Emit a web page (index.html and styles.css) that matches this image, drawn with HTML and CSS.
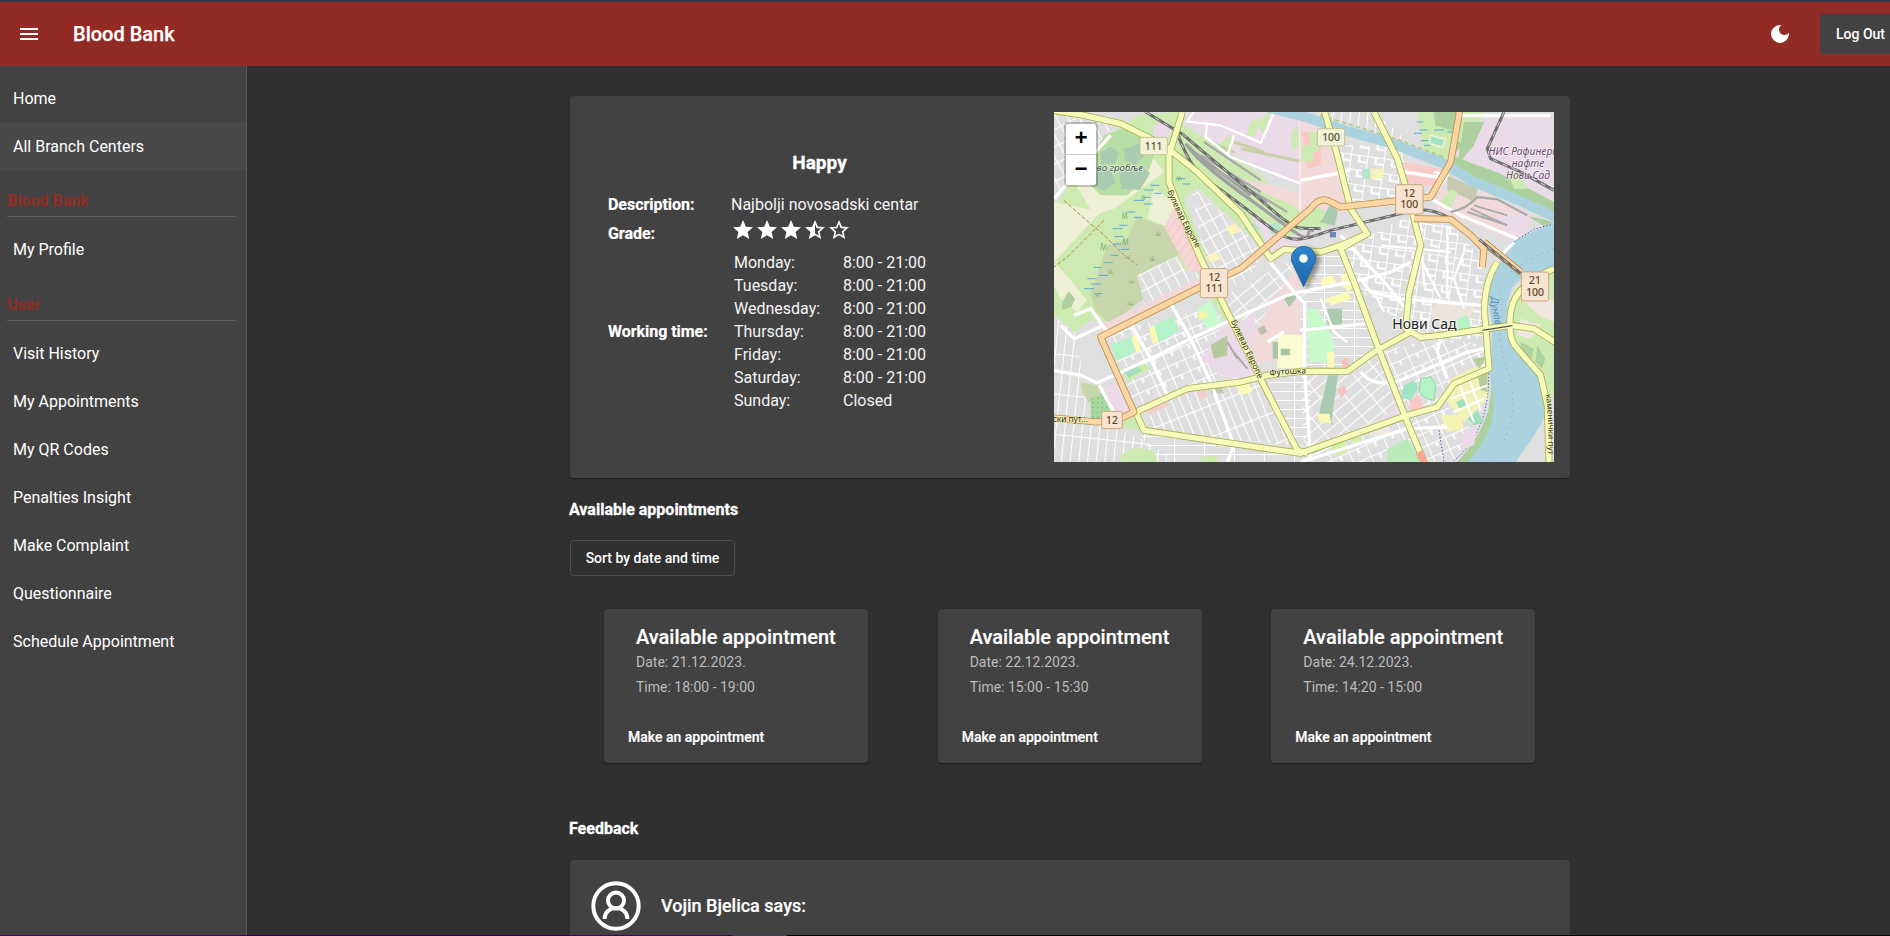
FILE: index.html
```
<!DOCTYPE html>
<html lang="en">
<head>
<meta charset="utf-8">
<title>Blood Bank</title>
<link rel="stylesheet" href="styles.css">
</head>
<body>
<header class="topbar">
  <svg class="menu-icon" viewBox="0 0 24 24"><path d="M3 18h18v-2H3v2zm0-5h18v-2H3v2zm0-7v2h18V6H3z"/></svg>
  <h1 class="brand">Blood Bank</h1>
  <svg class="moon-icon" viewBox="0 0 24 24"><path d="M12 3a9 9 0 1 0 9 9c0-.46-.04-.92-.1-1.36a5.39 5.39 0 0 1-4.4 2.26 5.4 5.4 0 0 1-3.14-9.8C12.92 3.04 12.46 3 12 3z"/></svg>
  <button class="logout">Log Out</button>
</header>
<div class="shell">
  <nav class="sidebar">
    <a class="nav-item">Home</a>
    <a class="nav-item active">All Branch Centers</a>
    <h3 class="nav-head">Blood Bank</h3>
    <a class="nav-item">My Profile</a>
    <h3 class="nav-head">User</h3>
    <a class="nav-item">Visit History</a>
    <a class="nav-item">My Appointments</a>
    <a class="nav-item">My QR Codes</a>
    <a class="nav-item">Penalties Insight</a>
    <a class="nav-item">Make Complaint</a>
    <a class="nav-item">Questionnaire</a>
    <a class="nav-item">Schedule Appointment</a>
  </nav>
  <main class="content">
    <section class="card center-card">
      <div class="info">
        <h2 class="center-name">Happy</h2>
        <div class="facts">
          <b class="label">Description:</b><span>Najbolji novosadski centar</span>
          <b class="label">Grade:</b>
          <div class="stars">
            <svg viewBox="0 0 24 24"><path d="M12 17.27 18.18 21l-1.64-7.03L22 9.24l-7.19-.61L12 2 9.19 8.63 2 9.24l5.46 4.73L5.82 21z"/></svg>
            <svg viewBox="0 0 24 24"><path d="M12 17.27 18.18 21l-1.64-7.03L22 9.24l-7.19-.61L12 2 9.19 8.63 2 9.24l5.46 4.73L5.82 21z"/></svg>
            <svg viewBox="0 0 24 24"><path d="M12 17.27 18.18 21l-1.64-7.03L22 9.24l-7.19-.61L12 2 9.19 8.63 2 9.24l5.46 4.73L5.82 21z"/></svg>
            <svg viewBox="0 0 24 24"><path d="m22 9.24-7.19-.62L12 2 9.19 8.63 2 9.24l5.46 4.73L5.82 21 12 17.27 18.18 21l-1.63-7.03L22 9.24zM12 15.4V6.1l1.71 4.04 4.38.38-3.32 2.88 1 4.28L12 15.4z"/></svg>
            <svg viewBox="0 0 24 24"><path d="m22 9.24-7.19-.62L12 2 9.19 8.63 2 9.24l5.46 4.73L5.82 21 12 17.27 18.18 21l-1.63-7.03L22 9.24zM12 15.4l-3.76 2.27 1-4.28-3.32-2.88 4.38-.38L12 6.1l1.71 4.04 4.38.38-3.32 2.88 1 4.28L12 15.4z"/></svg>
          </div>
          <b class="label">Working time:</b>
          <div class="hours">
            <span>Monday:</span><span>8:00 - 21:00</span>
            <span>Tuesday:</span><span>8:00 - 21:00</span>
            <span>Wednesday:</span><span>8:00 - 21:00</span>
            <span>Thursday:</span><span>8:00 - 21:00</span>
            <span>Friday:</span><span>8:00 - 21:00</span>
            <span>Saturday:</span><span>8:00 - 21:00</span>
            <span>Sunday:</span><span>Closed</span>
          </div>
        </div>
      </div>
      <div class="map">
        <svg class="tiles" viewBox="0 0 1500 1050">
          <defs>
            <pattern id="gridA" width="46" height="30" patternUnits="userSpaceOnUse" patternTransform="rotate(62)"><path d="M0 0H46M0 0V30" class="st"/></pattern>
            <pattern id="gridB" width="56" height="38" patternUnits="userSpaceOnUse" patternTransform="rotate(-24)"><path d="M0 0H56M0 0V38M28 0V16" class="st"/></pattern>
            <pattern id="gridC" width="50" height="44" patternUnits="userSpaceOnUse" patternTransform="rotate(8)"><path d="M0 0H50M0 0V44M26 0V20H50" class="st"/></pattern>
            <pattern id="gridD" width="60" height="30" patternUnits="userSpaceOnUse" patternTransform="rotate(-40)"><path d="M0 0H60M0 0V30" class="st"/></pattern>
            <pattern id="gridE" width="25" height="90" patternUnits="userSpaceOnUse" patternTransform="rotate(-22)"><path d="M0 0V90M0 0H25" class="st"/></pattern>
            <pattern id="gridF" width="90" height="27" patternUnits="userSpaceOnUse"><path d="M0 0H90M0 0V27" class="st"/></pattern>
            <pattern id="gridG" width="26" height="120" patternUnits="userSpaceOnUse" patternTransform="rotate(6)"><path d="M0 0V120M0 0H26" class="st"/></pattern>
            <pattern id="hatch" width="22" height="22" patternUnits="userSpaceOnUse" patternTransform="rotate(35)"><path d="M0 0V22" stroke="#eea9a9" stroke-width="2"/></pattern>
            <pattern id="dots" width="14" height="14" patternUnits="userSpaceOnUse"><circle cx="5" cy="5" r="1.6" fill="#3f7a55"/></pattern>
            <path id="bulEvr1" d="M340 238 Q370 310 428 412L460 480"/>
            <path id="bulEvr2" d="M530 628 Q570 710 612 800L640 860"/>
            <path id="futoska" d="M648 792 Q700 784 790 784"/>
            <path id="dunav" d="M1312 555 Q1314 600 1326 648L1340 700"/>
            <path id="kamen" d="M1475 848 Q1488 940 1480 1050V1100"/>
          </defs>
          <rect width="1500" height="1050" fill="#dfdfdf"/>

          <!-- street grids by district -->
          <polygon points="0,0 180,40 120,110 0,260" fill="url(#gridA)"/>
          <polygon points="410,220 640,420 560,520 460,500" fill="url(#gridA)"/>
          <polygon points="250,490 380,430 430,520 280,600" fill="url(#gridA)"/>
          <polygon points="810,0 960,0 1110,130 1000,110 850,60" fill="url(#gridG)"/>
          <polygon points="850,100 1050,100 1060,260 870,270" fill="url(#gridC)"/>
          <polygon points="850,420 1070,310 1190,340 1280,430 1300,680 1120,680 940,560" fill="url(#gridC)"/>
          <polygon points="740,430 860,420 970,690 900,780 740,780" fill="url(#gridF)"/>
          <polygon points="480,570 720,440 760,560 620,690 560,620" fill="url(#gridD)"/>
          <polygon points="130,670 500,580 560,800 240,880" fill="url(#gridB)"/>
          <polygon points="250,900 420,820 620,800 720,1000 270,960" fill="url(#gridE)"/>
          <polygon points="0,610 60,640 110,920 260,980 380,1050 0,1050" fill="url(#gridG)"/>
          <polygon points="260,960 760,1030 760,1050 300,1050" fill="url(#gridF)"/>
          <polygon points="640,800 770,790 770,1000 720,1000" fill="url(#gridF)"/>
          <polygon points="740,790 900,790 970,700 1050,900 750,1010" fill="url(#gridD)"/>
          <polygon points="970,720 1150,680 1300,700 1300,780 1150,880 1060,900" fill="url(#gridB)"/>
          <polygon points="750,1010 1060,910 1100,1050 740,1050" fill="url(#gridB)"/>
          <polygon points="1060,910 1180,880 1260,960 1200,1050 1110,1050" fill="url(#gridB)"/>

          <!-- western fields and cemetery -->
          <polygon points="0,290 60,190 180,60 250,10 380,0 400,180 470,190 390,260 460,440 440,480 250,530 150,630 0,610" fill="#cdebb0"/>
          <polygon points="0,270 140,300 0,450" fill="#eef0d5"/>
          <polygon points="60,210 300,140 330,180 180,290 120,310" fill="#eef0d5"/>
          <polygon points="300,230 380,280 340,345 280,320" fill="#eef0d5"/>
          <polygon points="0,450 30,480 120,590 0,610" fill="#eef0d5"/>
          <path d="M110 150l40-80 60-20 70 30 20 50-20 60-60 60-80 0-40-40z" fill="#b8dda5"/>
          <path d="M140 120l30-16 26 20-14 30-40 4zM210 110l44-14 22 30-34 34-30-14zM120 170l50 6 16 36-36 24-40-24zM196 184l66-20 26 20-30 50-56-4z" fill="#aacbaf"/>
          <polygon points="250,315 340,345 390,420 250,490 280,550 170,640 100,570 160,400 220,380" fill="#c8d7ab"/>
          <polygon points="330,345 360,290 380,290 445,470 410,490" fill="#f5d5d5"/>
          <polygon points="330,345 360,290 380,290 445,470 410,490" fill="url(#hatch)"/>
          <path d="M250 490L370 433L392 475L440 485L400 560L275 596z" fill="#dfdfdf"/>
          <path d="M250 490L370 433L392 475L440 485L400 560L275 596z" fill="url(#gridA)"/>
          <polygon points="140,640 440,495 445,535 150,685" fill="#f2dada"/>
          <polygon points="0,520 20,560 70,600 110,550 130,610 60,660 0,610" fill="#cdebb0"/>
          <path d="M25 570l18-32 20 22-10 24-30 10z" fill="#add19e"/>
          <path d="M30 265l60 54 60 50 60 60 40 30M150 325l-50 50-60 60-40 30" class="track"/>
          <path d="M290 220h26M270 234h28M300 244h22M270 256h20M240 265h30M270 276h26M220 300h24M240 316h26M196 340h24M176 350h30M180 374h28M176 396h26M200 412h26M170 430h24M150 452h26M120 466h22M134 490h28M100 500h24M110 516h30M370 200h24M386 216h22M90 530h30M120 545h24" class="marsh"/>
          <path d="M205 320l3-18 4 18 5-20 3 20M206 400l4-22 4 22 5-20 3 20M140 415l4-22 5 22 5-18 3 18M262 264l4-14 4 14 4-14M366 206l4-12 4 12 4-12 4 12" class="reed"/>
          <path d="M304 370h18M306 361l7 9 7-9M313 357v13M286 445h18M288 436l7 9 7-9M295 432v13M212 438h18M214 429l7 9 7-9M160 484h18M162 475l7 9 7-9M169 471v13M224 512h18M226 503l7 9 7-9M120 552h18M122 543l7 9 7-9M220 578h18M222 569l7 9 7-9" class="scrub"/>

          <!-- northern industry and rail yard -->
          <polygon points="380,0 740,0 760,220 700,210 470,80" fill="#ebdbe8"/>
          <polygon points="260,10 360,20 620,190 740,300 740,390 600,380 400,200 380,140" fill="#cdebb0"/>
          <path d="M300 40l30-14 24 30-20 40-40-10z" fill="#ebdbe8"/>
          <polygon points="560,200 660,220 750,250 760,330 720,280 600,230" fill="#f2dada"/>
          <polygon points="590,310 640,330 700,390 760,330 740,420 660,430" fill="#ebdbe8"/>
          <path d="M590 30l30-18-18 60-26 6zM490 100l40-30 6 40-26 30zM710 70l20-30 6 60-20 20zM610 40l30-40 10 4-20 60z" fill="#cdebb0"/>
          <path d="M540 90l90 30M560 110l180 38M480 95l60 26" stroke="#c8d0a8" stroke-width="9"/>
          <path d="M395 95C450 170 560 240 680 330S740 350 780 355M400 100C430 140 520 190 590 250" class="yard"/>
          <path d="M450 90L620 205M440 130L620 240M480 170L700 300M520 190L640 270" stroke="#aaa" stroke-width="7" fill="none"/>
          <path d="M460 30L455 75L530 135L740 215L780 220M420 0L400 28L500 40L620 92L640 50L660 0M740 30V300M520 130L540 70" class="minor"/>

          <polygon points="738,20 820,40 850,160 900,290 740,340" fill="#f2dada"/>
          <polygon points="744,60 800,60 800,160 760,170" fill="#f9c9c2"/>
          <path d="M744 100h34v48h-34zM764 60h30v60h-20z" fill="#cdebb0"/>
          <path d="M738 300l40-20 40 20 10 40-90 20z" fill="#cdebb0"/>
          <path d="M806 320l20-40 26 16-10 46-46-12z" fill="#aacbaf"/>
          <path d="M1050 150l110 22-20 50-80-10z" fill="#f8caca"/>
          <path d="M925 170h24v30h-24zM1060 250l60 0-20 40-40-10z" fill="#b6e3cb"/>
          <path d="M950 170h38v30h-38z" fill="#f5f3b8"/>
          <polygon points="1090,0 1290,0 1190,190 1110,130" fill="#cdebb0"/>
          <path d="M1140 0h84l-20 60-60-20zM1200 80l30 20-20 70-30-20z" fill="#add19e"/>
          <path d="M1130 70l44 12-8 24-40-12z" fill="#9fe5c5" stroke="#eef0d5" stroke-width="5"/>
          <path d="M1088 30h20M1096 54h24M1080 64h24M1140 54h30M1180 60h20M1100 86h24M1110 100h20" class="marsh"/>
          <polygon points="1290,20 1500,20 1500,300 1330,220 1200,130" fill="#ebdbe8"/>
          <path d="M1230 30l60 0-30 70-50 60z" fill="#add19e"/>
          <path d="M1190 130L1340 185L1500 270V310L1340 230L1200 180z" fill="#add19e"/>
          <path d="M1360 180l40 0 20 50-40 0z" fill="#cdebb0"/>
          <path d="M1180 190l90 40-10 60-80-30z" fill="#c6c8b0"/>
          <path d="M1160 230l60 20-20 60-60-20zM1220 250l40 20-30 60-40-20z" fill="#f2dada"/>
          <path d="M1190 230l20 10-20 50-34-14z" fill="#cdebb0"/>
          <path d="M1200 310L1290 240L1440 310L1400 380L1360 380z" fill="#f2dada"/>
          <path d="M1330 320l90-20 10 30-40 50-30-20z" fill="#ebdbe8"/>
          <path d="M1420 312l50 10 30 10-30 10z" fill="#add19e"/>
          <path d="M1250 290l110 50M1240 300l120 40M1260 280l100 30" stroke="#aaa" stroke-width="6"/>

          <!-- canal and Danube -->
          <path d="M640 -14L738 10L798 29L888 59L1018 96L1168 154L1258 209L1358 249L1510 318" fill="none" stroke="#aad3df" stroke-width="30"/>
          <path d="M800 10L1030 82L1170 136" stroke="#b9c98b" stroke-width="5" stroke-dasharray="14 8" fill="none"/>
          <path d="M1380 530L1500 469V880L1478 860L1463 804L1383 704z" fill="#cdebb0"/>
          <path d="M1400 560l50-20 50 30v60l-40-16zM1400 620l60 20-30 40-40-10z" fill="#f1e6df"/>
          <path d="M1400 690l40 20-10 40-30-20zM1450 700l24 40-10 30-20-20z" fill="#add19e"/>
          <path d="M1500 850L1400 1050H1500z" fill="#dfdfdf"/>
          <path d="M1500 334L1458 349L1388 384L1348 434L1318 484L1308 534L1303 564L1313 634L1313 704L1308 784L1316 844L1308 904L1283 974L1238 1029L1225 1050H1385L1438 974L1473 914L1478 854L1463 804L1428 754L1383 704L1373 654L1358 584L1372 530L1400 500L1458 484L1500 469z" fill="#aad3df"/>
          <path d="M1308 790Q1330 920 1210 1050H1240Q1330 960 1318 850z" fill="#add19e"/>
          <path d="M1336 540Q1350 600 1336 650Q1340 720 1370 800Q1400 960 1300 1050M1500 410L1430 440L1340 500" fill="none" stroke="#a79cc0" stroke-width="3" stroke-dasharray="4 14"/>
          <path d="M1490 338L1440 352L1370 395M1304 774Q1310 960 1195 1050M1155 955L1170 1050" fill="none" stroke="#4545d8" stroke-width="3" stroke-dasharray="4 6"/>

          <!-- parks, schools, squares -->
          <path d="M560 630L600 600L620 790L520 800L440 740L480 690L500 650z" fill="#ebdbe8"/>
          <path d="M470 700l50-30 0 60-40 10z" fill="#b5c99a"/>
          <path d="M530 710l50 60M520 690l30 50" stroke="#aaa" stroke-width="6"/>
          <path d="M660 560L740 460V750L600 750L580 700z" fill="#f2dada"/>
          <path d="M690 560l24-20 14 16-22 30z" fill="#a9c6a8"/>
          <path d="M670 668h80v100h-80z" fill="#fbfbd2"/><path d="M656 690h16v50h-16zM680 710h28v20h-28z" fill="#a9c6a8"/>
          <path d="M610 650l20-10 10 20-20 10z" fill="#c0bfae"/>
          <path d="M430 590l40-24 30 70-38 24z" fill="#c8facc"/><path d="M430 605l26-10 4 20-24 10z" fill="#f5f3a8"/>
          <path d="M470 560l36-14 28 70-22 14z" fill="#cdebb0"/>
          <path d="M300 640l56-28 18 44-60 36zM170 700l60-26 14 44-60 30z" fill="#b5f2c8"/>
          <path d="M286 650l14-10 14 48-18 8zM234 676l14-6 14 44-14 8z" fill="#fdfab0"/>
          <path d="M146 830l60-18 28 90-40 14-30-40z" fill="#ebdbe8"/>
          <path d="M80 810l60 14 10 20-44 30-20-30z" fill="#c8d7ab"/>
          <path d="M110 860l40-18 20 60-10 24-50-8z" fill="#a6d8a0"/><path d="M110 860l40-18 20 60-10 24-50-8z" fill="url(#dots)"/>
          <path d="M200 770l70-20 20 20-70 40z" fill="#cdebb0"/><path d="M210 780l40-18 14 14-40 22z" fill="#aadcc0"/>
          <path d="M200 910l60-10 20 60-80-16z" fill="#cdebb0"/>
          <path d="M545 820l40-6 10 26-34 10z" fill="#fdfab8"/>
          <path d="M470 826l32-6 8 24-38 2z" fill="#c6c8b0"/>
          <path d="M280 890l60-24 6 14-60 30zM430 840l20-6 10 20-22 8z" fill="#f4cdcd"/>
          <path d="M200 1030l40-24 60 10 10 34h-110zM440 1036l50-6 0 20-50 0z" fill="#cdebb0"/>
          <path d="M820 590h44v48h-44z" fill="#aacbaf"/><path d="M810 560l70-20 14 20-60 20z" fill="#fdfab8"/>
          <path d="M760 590h30l50 100v60h-76z" fill="#c8facc"/><path d="M820 720h20v50h-20z" fill="#fdfab8"/>
          <path d="M822 790h30l-20 140 10 10-30-10-18-20z" fill="#a9c9b0"/><path d="M790 905l36 0 6 30-36-6z" fill="#fdfab8"/>
          <path d="M850 830l20-10 10 20-20 16zM860 745l20-8 10 26-20 8zM938 600l14 6-2 18-14-4z" fill="#f6c5c0"/>
          <path d="M1130 590l50-24 90 4-20 40-60 40-40-20z" fill="#ece5dc"/><path d="M1210 620l30-10 14 40-40 10z" fill="#b5f2c8"/>
          <path d="M1050 820l30-14 14 20-24 40-30-10z" fill="#9fe5c5"/>
          <path d="M1100 800l30-6 16 26-6 46-26-8-18-18z" fill="#b5f2c8" stroke="#8fd6a8" stroke-width="3"/>
          <path d="M1066 870l24-26 20 40-40 20z" fill="#f9c9c9"/>
          <path d="M980 920l50-34 10 20-54 34z" fill="#ebdbe8"/>
          <path d="M1190 800l60-30 50-10 0 100-70 70-50-60z" fill="#f1f2ba"/>
          <path d="M1240 920l30-24 20 34-30 10zM1206 870l20-10 12 20-20 14z" fill="#9fdfba"/>
          <path d="M1270 790l30-10 0 60-20-6zM1256 740l40-6-20 36z" fill="#b4cd9a"/>
          <path d="M1220 970l50-30-10 60-30 10z" fill="#ebdbe8"/>
          <path d="M1160 910l60 0 10 40-50 10z" fill="#f5f3b0"/>
          <path d="M1180 830l100-40M1190 860l110-40M1200 900l90-40M1210 800l50 130M1240 786l40 110" class="st"/>
          <path d="M1000 1010l60-30 40 70h-100z" fill="#b8ebb8"/><path d="M930 940l60-20 20 44-50 10z" fill="#eee8e0"/>
          <path d="M830 1000l40-14 14 30-40 16zM890 980l30-6 10 20-30 10z" fill="#d2f0a8"/>
          <path d="M860 490l30-14 14 40-20 24-20-20zM750 490l20-8 10 26-20 6zM800 500l36-10 10 20-40 14z" fill="#fdfab8"/>
          <path d="M516 345l30-10 14 24-30 10zM460 432l26-10 14 20-30 10z" fill="#fdf3b8"/>
          <path d="M570 350l30-20 20 20-30 20zM640 340l30-10 14 20-30 20z" fill="#b6e3cb"/>

          <!-- white roads -->
          <path d="M0 775L80 790L130 812L180 790L290 740L410 680L540 620L700 550L738 540L890 510L1010 480L1070 450" class="main-w"/>
          <path d="M230 635L290 740L340 850M350 575L410 680L470 810L540 1000L520 1050M645 445L720 540L752 575L752 780L770 1040M860 370L1000 520L1070 610" class="main-w"/>
          <path d="M738 655L940 635M920 780Q960 830 1040 805L1240 720L1290 710M1160 670L1150 720L1180 800M740 1050L1060 950L1180 945M920 500L950 540L1040 560L1280 580M740 205L870 180L890 170" class="main-w"/>
          <path d="M1490 11H1220M1140 180L1180 190L1130 260L1220 310L1390 380M1380 392L1330 440M1050 180L1180 200M136 820L190 920M160 660L110 590L60 610M150 640L60 680L20 640" class="main-w"/>
          <path d="M800 560L840 660L880 690M960 540L990 600M1095 430L1160 560M1100 330L1110 520M1180 340L1180 560M1230 420L1200 500L1230 590M980 400L1080 410L1190 420" class="minor"/>
          <path d="M640 690L690 660M170 70L60 190L0 260" class="main-w"/>

          <!-- railways -->
          <path d="M275 0L390 70C470 140 560 210 650 290S740 345 800 350M370 65C400 140 420 180 480 220S600 310 660 355S760 380 830 355L1060 300Q1120 280 1190 320L1290 400L1400 485" class="rail"/>
          <path d="M275 0L390 70C470 140 560 210 650 290S740 345 800 350M370 65C400 140 420 180 480 220S600 310 660 355S760 380 830 355L1060 300Q1120 280 1190 320L1290 400L1400 485" class="rail-dash"/>
          <path d="M1350 0L1300 110L1310 140L1400 180L1500 235" class="rail"/><path d="M1350 0L1300 110L1310 140L1400 180L1500 235" class="rail-dash"/>
          <path d="M1190 300Q1240 290 1270 255L1330 262L1420 310" stroke="#aaa" stroke-width="7" fill="none"/>

          <!-- yellow roads -->
          <g class="casing-y"><path d="M0 -4L90 10L200 35L330 100L430 180L560 305L650 440L690 412L800 420L860 400L940 365"/><path d="M385 0L345 130L345 210L380 300L440 440L500 560L580 720L635 830L730 1015L760 1024"/><path d="M812 0L850 130L890 290L940 365L860 410L900 510L970 700L1060 930L1110 1050"/><path d="M960 0L1030 140L1060 240L1080 320L1100 400L1065 545L1055 650L1100 676L1160 670L1300 650L1370 640L1440 650L1510 695"/><path d="M1330 450Q1280 530 1295 640L1305 770L1200 815L1150 885L1060 910L740 1024L640 1010L270 955L245 900L400 830L560 810L640 790L740 778H880L960 720L1070 660"/><path d="M1500 470Q1380 520 1370 600T1390 710L1460 790L1480 880L1485 1050"/></g>
          <g class="fill-y"><path d="M0 -4L90 10L200 35L330 100L430 180L560 305L650 440L690 412L800 420L860 400L940 365"/><path d="M385 0L345 130L345 210L380 300L440 440L500 560L580 720L635 830L730 1015L760 1024"/><path d="M812 0L850 130L890 290L940 365L860 410L900 510L970 700L1060 930L1110 1050"/><path d="M960 0L1030 140L1060 240L1080 320L1100 400L1065 545L1055 650L1100 676L1160 670L1300 650L1370 640L1440 650L1510 695"/><path d="M1330 450Q1280 530 1295 640L1305 770L1200 815L1150 885L1060 910L740 1024L640 1010L270 955L245 900L400 830L560 810L640 790L740 778H880L960 720L1070 660"/><path d="M1500 470Q1380 520 1370 600T1390 710L1460 790L1480 880L1485 1050"/></g>

          <!-- orange roads -->
          <g class="casing-o"><path d="M0 918L130 930L200 920L240 900L140 675L440 525L560 470L770 290Q800 250 830 270L860 285L1130 255L1190 150L1215 10V-5M1080 320L1190 322L1250 370L1290 410L1285 465M1290 390L1400 480"/></g>
          <g class="fill-o"><path d="M0 918L130 930L200 920L240 900L140 675L440 525L560 470L770 290Q800 250 830 270L860 285L1130 255L1190 150L1215 10V-5M1080 320L1190 322L1250 370L1290 410L1285 465M1290 390L1400 480"/></g>
          <path d="M1094 1020L1112 1054" stroke="#f9a58f" stroke-width="20"/>
          <path d="M1275 382L1400 484" class="rail"/><path d="M1275 382L1400 484" class="rail-dash"/>
          <path d="M1285 655L1375 641" stroke="#555" stroke-width="4"/>
          <path d="M828 360h18v16h-18z" fill="#7085b0"/>

          <!-- labels -->
          <g class="shield">
            <rect x="258" y="76" width="82" height="52" rx="6" class="sy"/><text x="299" y="115">111</text>
            <rect x="790" y="50" width="82" height="52" rx="6" class="sy"/><text x="831" y="88">100</text>
            <rect x="1025" y="218" width="82" height="88" rx="6"/><text x="1066" y="254">12</text><text x="1066" y="289">100</text>
            <rect x="439" y="470" width="82" height="87" rx="6"/><text x="481" y="506">12</text><text x="481" y="541">111</text>
            <rect x="1402" y="480" width="82" height="87" rx="6"/><text x="1443" y="516">21</text><text x="1443" y="551">100</text>
            <rect x="143" y="898" width="62" height="52" rx="6"/><text x="174" y="936">12</text>
          </g>
          <text x="112" y="178" class="place-i green">ово гробље</text>
          <g class="place-i purple" text-anchor="middle"><text x="1408" y="129">НИС Рафинери</text><text x="1422" y="164">нафте</text><text x="1422" y="200">Нови Сад</text></g>
          <text x="1015" y="651" class="city">Нови Сад</text>
          <g class="road-name"><text><textPath href="#bulEvr1">Булевар Европе</textPath></text><text><textPath href="#bulEvr2">Булевар Европе</textPath></text><text><textPath href="#futoska">Футошка</textPath></text><text><textPath href="#kamen">каменички пут</textPath></text><text x="-4" y="931">ски пут...</text></g>
          <text class="river"><textPath href="#dunav">Дунав</textPath></text>
        </svg>
        <div class="zoom"><span>+</span><span>−</span></div>
        <svg class="pin" viewBox="0 0 25 41"><defs><linearGradient id="pinFill" x2="0" y2="1"><stop stop-color="#2e86cf"/><stop offset="1" stop-color="#1e65a8"/></linearGradient></defs><path d="M12.5.5C5.9.5.5 5.9.5 12.4c0 2.7.8 4.8 2.1 7L12.500 40.500 22.400 19.400c1.300-2.200 2.100-4.300 2.100-7C24.500 5.900 19.100.5 12.500.5z" fill="url(#pinFill)" stroke="#2466a5"/><circle cx="12.500" cy="12.500" r="4.300" fill="#fff"/></svg>
      </div>
    </section>

    <h3 class="section-title">Available appointments</h3>
    <button class="sort">Sort by date and time</button>
    <section class="slots">
      <article class="card slot"><h4>Available appointment</h4><p>Date: 21.12.2023.</p><p>Time: 18:00 - 19:00</p><a>Make an appointment</a></article>
      <article class="card slot"><h4>Available appointment</h4><p>Date: 22.12.2023.</p><p>Time: 15:00 - 15:30</p><a>Make an appointment</a></article>
      <article class="card slot"><h4>Available appointment</h4><p>Date: 24.12.2023.</p><p>Time: 14:20 - 15:00</p><a>Make an appointment</a></article>
    </section>

    <h3 class="section-title">Feedback</h3>
    <section class="card feedback">
      <svg class="avatar" viewBox="0 0 50 50"><circle cx="25" cy="25" r="22.700"/><circle cx="25" cy="19.500" r="8"/><path d="M13.700 38V37a11.300 10 0 0 1 22.600 0v1"/></svg>
      <span>Vojin Bjelica says:</span>
    </section>
  </main>
</div>
<div class="edge"></div>
</body>
</html>
```
FILE: styles.css
```
* { box-sizing: border-box; }
body {
  margin: 0;
  height: 936px;
  overflow: hidden;
  display: flex;
  flex-direction: column;
  background: #303030;
  color: #fff;
  font: 400 16px/24px Roboto, sans-serif;
}
h1, h2, h3, h4, p { margin: 0; }
button { font: inherit; color: inherit; }

.topbar {
  flex: none;
  height: 66px;
  border-top: 2px solid #353545;
  background: #912b23;
  display: flex;
  align-items: center;
  padding-left: 17px;
  overflow: hidden;
}
.topbar svg { flex: none; width: 24px; height: 24px; fill: #fff; }
.brand { margin-left: 32px; font-size: 20px; font-weight: 500; -webkit-text-stroke: .25px #fff; }
.moon-icon { margin-left: auto; }
.logout {
  flex: none;
  width: 82px;
  height: 40px;
  margin: 0 -12px 0 28px;
  padding: 0 0 1px 16px;
  border: 0;
  border-radius: 4px;
  background: #424242;
  font-size: 14px;
  font-weight: 500;
  text-align: left;
}

.shell { flex: 1; min-height: 0; display: flex; }
.sidebar {
  flex: none;
  width: 247px;
  padding-top: 8px;
  background: #424242;
  border-right: 1px solid #5a5a5a;
  display: flex;
  flex-direction: column;
}
.nav-item { flex: none; height: 48px; padding-left: 13px; line-height: 49px; }
.nav-item.active { background: #494949; }
.nav-head {
  flex: none;
  height: 47px;
  margin: 0 10px 8px 7px;
  padding-top: 19px;
  border-bottom: 1px solid #5e5e5e;
  color: #912b23;
  font-size: 16px;
  font-weight: 700;
}
.nav-item + .nav-head ~ .nav-head { padding-top: 20px; height: 48px; }

.content {
  flex: none;
  width: 1000px;
  margin-left: 323px;
  padding-top: 30px;
  display: flex;
  flex-direction: column;
  align-items: flex-start;
}
.card {
  background: #424242;
  border-radius: 4px;
  box-shadow: 0 2px 1px -1px rgba(0,0,0,.2), 0 1px 1px rgba(0,0,0,.14), 0 1px 3px rgba(0,0,0,.12);
}
.center-card { flex: none; width: 1000px; height: 382px; padding: 16px; display: flex; justify-content: space-between; }
.info { width: 468px; padding: 38px 0 0 22px; }
.center-name { width: 423px; font-size: 19px; line-height: 26px; text-align: center; font-weight: 700; -webkit-text-stroke: .3px #fff; }
.facts { display: grid; grid-template-columns: 123px auto; align-items: center; margin-top: 17px; line-height: 23px; color: #f5f5f5; }
.label { color: #fff; font-weight: 700; letter-spacing: -.04px; -webkit-text-stroke: .2px #fff; }
.stars { display: flex; height: 35px; padding-bottom: 8px; align-items: center; }
.stars svg { width: 24px; height: 24px; fill: #fff; }
.hours { display: grid; grid-template-columns: 109px auto; padding-left: 3px; }

.map { position: relative; width: 500px; height: 350px; overflow: hidden; }
.tiles { display: block; width: 500px; height: 350px; }
.st { fill: none; stroke: #fff; stroke-width: 6; }
.minor { fill: none; stroke: #fff; stroke-width: 7; }
.main-w { fill: none; stroke: #fff; stroke-width: 10; stroke-linejoin: round; }
.track { fill: none; stroke: #b28d52; stroke-width: 3; stroke-dasharray: 12 6; }
.marsh { stroke: #58a9dc; stroke-width: 3; }
.reed { fill: none; stroke: #68ad78; stroke-width: 2; }
.scrub { fill: none; stroke: #9aac78; stroke-width: 2; }
.yard { fill: none; stroke: #a0a0a0; stroke-width: 10; }
.rail { fill: none; stroke: #6d6d6d; stroke-width: 9; }
.rail-dash { fill: none; stroke: #d5d5d5; stroke-width: 3; stroke-dasharray: 16 16; }
.casing-y path, .fill-y path, .casing-o path, .fill-o path { fill: none; stroke-linejoin: round; }
.casing-y path { stroke: #a9b050; stroke-width: 21; }
.fill-y path { stroke: #f6fabb; stroke-width: 16; }
.casing-o path { stroke: #bd8f4b; stroke-width: 21; }
.fill-o path { stroke: #fcd6a4; stroke-width: 16; }
.tiles text { font-family: "Noto Sans", sans-serif; }
.shield rect { fill: #f6e3d0; stroke: #c9a57c; stroke-width: 3; }
.shield .sy { fill: #f1f2d8; stroke: #c2c48f; }
.shield text { font-size: 31px; text-anchor: middle; fill: #5f4427; stroke: #5f4427; stroke-width: .6; }
.shield .sy + text { fill: #50502c; }
.place-i { font-size: 29px; font-style: italic; paint-order: stroke; stroke: #fff; stroke-opacity: .6; stroke-width: 5; }
.green { fill: #3c5546; }
.purple { fill: #6e4a72; font-size: 31px; }
.city { font-size: 42px; fill: #222; paint-order: stroke; stroke: #fff; stroke-width: 6; stroke-opacity: .7; }
.road-name { font-size: 25px; fill: #2b2b1c; paint-order: stroke; stroke: #f6fabb; stroke-width: 3; }
.river { font-size: 30px; font-style: italic; fill: #5c8fbb; }
.zoom {
  position: absolute;
  left: 10px;
  top: 10px;
  width: 34px;
  height: 65px;
  border: 2px solid rgba(0,0,0,.2);
  border-radius: 4px;
  background: #fff;
  background-clip: padding-box;
  color: #000;
  font: 700 22px/30px "Liberation Mono", monospace;
  text-align: center;
}
.zoom span { display: block; height: 31px; padding-top: 2px; line-height: 28px; }
.zoom span:first-child { border-bottom: 1px solid #ccc; }
.pin { position: absolute; left: 237px; top: 134px; width: 25px; height: 41px; filter: drop-shadow(4px 2px 2px rgba(0,0,0,.4)); }

.section-title { flex: none; margin: 19px 0 0 -1px; font-size: 16px; line-height: 25px; height: 24px; font-weight: 700; -webkit-text-stroke: .3px #fff; }
.sort { flex: none; height: 36px; width: 165px; margin-top: 19px; padding: 0 0 1px; border: 1px solid #4c4c4c; border-radius: 4px; background: none; font-size: 14px; font-weight: 500; }
.slots { flex: none; width: 1001px; display: grid; grid-template-columns: repeat(3, 1fr); margin-top: 33px; }
.slot { width: 264px; height: 154px; margin-left: 34px; padding: 16px 24px 0 32px; white-space: nowrap; }
.slot h4 { font-size: 20px; line-height: 25px; height: 24px; font-weight: 500; -webkit-text-stroke: .2px #fff; }
.slot p { height: 25px; font-size: 14px; line-height: 26px; color: #bdbdbd; }
.slot a { display: block; margin: 26px 0 0 -8px; font-size: 14px; line-height: 24px; font-weight: 500; -webkit-text-stroke: .2px #fff; }
.slots + .section-title { margin-top: 53px; }
.feedback { flex: none; width: 1000px; height: 120px; margin-top: 20px; padding: 21px; display: flex; align-items: flex-start; gap: 20px; font-size: 18px; font-weight: 500; line-height: 50px; }
.feedback span { -webkit-text-stroke: .2px #fff; }
.avatar { width: 50px; height: 50px; fill: none; stroke: #fff; stroke-width: 4; }
.edge { position: absolute; left: 0; top: 935px; width: 1890px; height: 1px; background: linear-gradient(90deg, #2c0d55 0 732px, #443b4c 732px 787px, #08040c 787px); }
```
